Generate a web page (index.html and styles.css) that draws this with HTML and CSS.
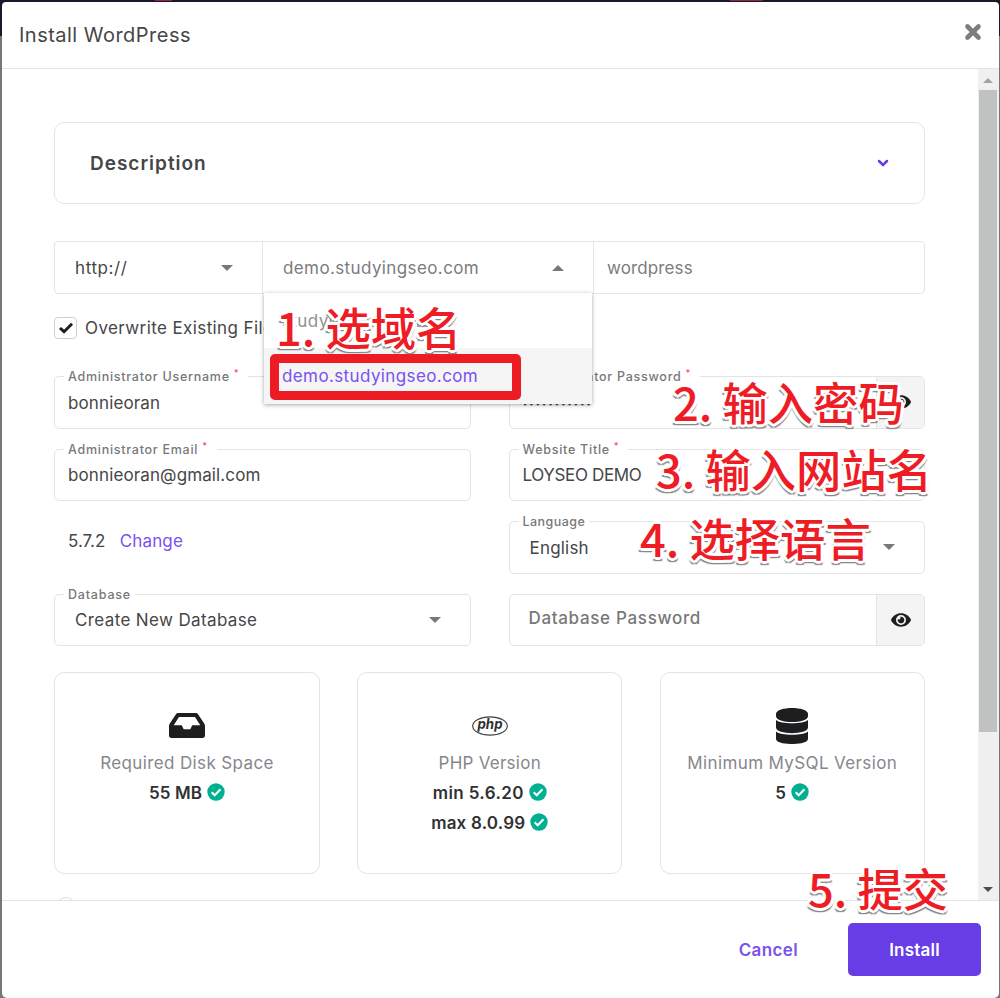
FILE: index.html
```html
<!DOCTYPE html>
<html lang="en">
<head>
<meta charset="utf-8">
<title>Install WordPress</title>
<link rel="stylesheet" href="styles.css">
</head>
<body>
<svg class="defs" width="0" height="0">
  <symbol id="check" viewBox="0 0 18 18"><circle cx="9" cy="9" r="8.7" fill="#00b090"/><path d="M4.7 9.3l3 3 5.8-6" fill="none" stroke="#fff" stroke-width="2.1"/></symbol>
  <symbol id="eye" viewBox="0 0 576 512"><path fill="#1d1e20" d="M572.5 241.4C518.3 135.6 410.9 64 288 64S57.7 135.600 3.500 241.400a32.400 32.400 0 0 0 0 29.200C57.700 376.400 165.100 448 288 448s230.300-71.600 284.500-177.400a32.400 32.400 0 0 0 0-29.200zM288 400a144 144 0 1 1 144-144 143.900 143.900 0 0 1-144 144zm0-240a95.300 95.300 0 0 0-25.300 3.800 47.900 47.900 0 0 1-66.900 66.900A95.800 95.800 0 1 0 288 160z"/></symbol>
</svg>
<div class="backdrop">
  <i class="bg-pink pink-a"></i><i class="bg-pink pink-b"></i>
  <div class="dialog">
    <header class="header">
      <h1 class="title t-title">Install WordPress</h1>
      <svg class="close" width="18" height="18" viewBox="0 0 18 18"><path d="M3.500 3.500l11 11M14.500 3.500l-11 11" stroke="#7d7d7e" stroke-width="4.600" stroke-linecap="round"/></svg>
    </header>
    <div class="middle">
      <main class="content">
        <section class="description">
          <span class="t-desc">Description</span>
          <svg width="12" height="8" viewBox="0 0 12 8"><path d="M2 2l4 4 4-4" fill="none" stroke="#673de6" stroke-width="2.500" stroke-linecap="round"/></svg>
        </section>

        <div class="url-row">
          <div class="url-cell scheme"><span class="t-http">http://</span><i class="tri down"></i></div>
          <div class="url-cell domain">
            <span class="t-domain">demo.studyingseo.com</span><i class="tri up"></i>
            <div class="menu">
              <div class="option"><span class="t-domain">studyingseo.com</span></div>
              <div class="option selected"><span class="t-domain">demo.studyingseo.com</span></div>
            </div>
          </div>
          <div class="url-cell path"><span class="t-wp">wordpress</span></div>
        </div>

        <div class="check-row">
          <span class="checkbox"><svg width="16" height="12" viewBox="0 0 16 12"><path d="M2 6l4 3.700L14 1.800" fill="none" stroke="#1d1e20" stroke-width="3"/></svg></span>
          <span class="t-over">Overwrite Existing Files</span>
        </div>

        <div class="fields">
          <div class="field"><label class="label">Administrator Username<b>*</b></label><span class="t-user">bonnieoran</span></div>
          <div class="field"><label class="label">Administrator Password<b>*</b></label><span class="dots">···········</span><span class="addon"><svg width="20" height="18"><use href="#eye"/></svg></span></div>
          <div class="field"><label class="label">Administrator Email<b>*</b></label><span class="t-mail">bonnieoran@gmail.com</span></div>
          <div class="field"><label class="label">Website Title<b>*</b></label><span class="t-site">LOYSEO DEMO</span></div>
          <div class="version"><span class="t-ver">5.7.2</span><a class="t-change">Change</a></div>
          <div class="field select"><label class="label t-lang">Language</label><span class="t-eng">English</span><i class="tri down"></i></div>
          <div class="field select"><label class="label t-dbl">Database</label><span class="t-create">Create New Database</span><i class="tri down"></i></div>
          <div class="field dbpass"><span class="t-dbp">Database Password</span><span class="addon"><svg width="20" height="18"><use href="#eye"/></svg></span></div>
        </div>

        <div class="cards">
          <div class="card">
            <div class="icon"><svg width="36" height="25" viewBox="0 0 36 25"><path fill="#1d1e20" fill-rule="evenodd" d="M9.500 0h17c1.300 0 2 .5 2.700 1.400l6 9c.5.800.8 1.500.8 2.500v9.600c0 1.500-1 2.500-2.500 2.500h-31C1 25 0 24 0 22.500v-9.600c0-1 .3-1.700.8-2.500l6-9C7.500.500 8.200 0 9.500 0zM10 4l-5.300 8.200h8l2 4h6.600l2-4h8L26 4z"/></svg></div>
            <span class="name t-disk">Required Disk Space</span>
            <span class="value"><span class="t-55">55 MB</span><svg width="18" height="18"><use href="#check"/></svg></span>
          </div>
          <div class="card">
            <div class="icon"><svg width="36" height="20" viewBox="0 0 36 20"><ellipse cx="18" cy="10" rx="17.300" ry="9.200" fill="none" stroke="#444" stroke-width="1.200"/><text x="18" y="13.400" text-anchor="middle" class="php" textLength="25" lengthAdjust="spacingAndGlyphs">php</text></svg></div>
            <span class="name t-php">PHP Version</span>
            <span class="value"><span class="t-min">min 5.6.20</span><svg width="18" height="18"><use href="#check"/></svg></span>
            <span class="value"><span class="t-max">max 8.0.99</span><svg width="18" height="18"><use href="#check"/></svg></span>
          </div>
          <div class="card">
            <div class="icon"><svg width="32" height="36" viewBox="0 0 32 36"><g fill="#1d1e20"><path d="M0 6C0-2 32-2 32 6v2c0 8-32 8-32 0z"/><path d="M0 12c4.500 4.400 27.500 4.400 32 0v7.500c0 7.500-32 7.500-32 0z"/><path d="M0 23.500c4.500 4.400 27.500 4.400 32 0V31c0 6.700-32 6.700-32 0z"/></g></svg></div>
            <span class="name t-mysql">Minimum MySQL Version</span>
            <span class="value"><span class="t-5">5</span><svg width="18" height="18"><use href="#check"/></svg></span>
          </div>
        </div>
        <i class="next-radio"></i>
      </main>
      <div class="scrollbar"><i class="sb-up"></i><div class="thumb"></div><i class="sb-down"></i></div>
    </div>
    <footer class="footer"><a class="t-cancel">Cancel</a><button class="install"><span class="t-install">Install</span></button></footer>
  </div>
  <div class="mark-box"></div>
  <div class="note n1">1. 选域名</div>
  <div class="note n2">2. 输入密码</div>
  <div class="note n3">3. 输入网站名</div>
  <div class="note n4">4. 选择语言</div>
  <div class="note n5">5. 提交</div>
</div>
</body>
</html>
```
FILE: styles.css
```css
* { box-sizing: border-box; }
body { margin: 0; font-family: Inter, "Noto Sans", sans-serif; font-size: 17px; color: #454648; }
.defs { position: absolute; }
svg { display: block; flex: none; }
.backdrop { position: relative; width: 1000px; height: 998px; overflow: hidden; padding: 2px 1px 0 2px; background: linear-gradient(#1c1729 36px, #777779 36px); }
.bg-pink { position: absolute; top: 0; height: 1px; background: #8d2748; }
.pink-a { left: 155px; width: 17px; }
.pink-b { left: 730px; width: 33px; }
.dialog { display: flex; flex-direction: column; height: 996px; background: #fff; border-radius: 4px 4px 5px 5px; overflow: hidden; }
.header { display: flex; justify-content: space-between; align-items: flex-start; height: 67px; padding: 0 17px; border-bottom: 1px solid #e4e4e5; }
.title { margin: 0; font-size: 20px; font-weight: 400; line-height: 67px; letter-spacing: .48px; }
.close { margin-top: 21px; }
.middle { display: flex; height: 832px; border-bottom: 1px solid #e4e4e5; }
.content { width: 976px; padding: 53px 53px 0 52px; overflow: hidden; }
.scrollbar { flex: 1; display: flex; flex-direction: column; align-items: center; background: #f0f0f0; padding: 9px 2px 0 0; }
.thumb { width: 18px; height: 642px; margin-top: 7px; background: #c0c1c1; }
.sb-up, .sb-down { border: 5px solid transparent; border-top: 0; border-bottom: 5px solid #a3a3a3; }
.sb-down { border-bottom: 0; border-top: 5px solid #505050; margin-top: 155px; }

.description { display: flex; justify-content: space-between; align-items: center; height: 82px; padding: 0 35px; border: 1px solid #e4e4e5; border-radius: 10px; font-size: 19px; font-weight: 600; letter-spacing: .98px; }
.url-row { display: flex; height: 53px; margin-top: 37px; border: 1px solid #e4e4e5; border-radius: 4px; }
.url-cell { position: relative; display: flex; justify-content: space-between; align-items: center; padding: 0 29px 0 20px; color: #7b7c80; }
.scheme { width: 208px; color: #454648; border-right: 1px solid #e4e4e5; }
.domain { width: 331px; border-right: 1px solid #e4e4e5; }
.path { padding-left: 13px; }
.tri { border: 6px solid transparent; border-top: 6px solid #77787a; border-bottom: 0; }
.tri.up { border-top: 0; border-bottom: 6px solid #77787a; }
.menu { position: absolute; z-index: 2; left: 1px; top: 51px; width: 328px; height: 111px; background: #fff; box-shadow: 0 1px 4px rgba(0,0,0,.35); }
.option { display: flex; align-items: center; height: 55px; padding-left: 18px; color: #8f9092; }
.option.selected { height: 56px; color: #7a52ee; background: #f5f5f5; }
.check-row { display: flex; align-items: center; height: 23px; margin-top: 22px; gap: 8px; }
.checkbox { display: flex; align-items: center; justify-content: center; width: 23px; height: 22px; border: 1px solid #d0d0d2; border-radius: 4px; }

.t-http { letter-spacing: .6px; }
.t-domain { letter-spacing: .39px; }
.t-over { letter-spacing: .4px; }
.t-php, .t-5 { letter-spacing: .25px; }
.t-wp, .t-user, .t-mail, .t-change, .t-55 { letter-spacing: .12px; }
.t-site { letter-spacing: -.36px; }
.t-create, .t-disk, .t-mysql, .t-min, .t-cancel { letter-spacing: .37px; }
.t-eng, .t-max, .t-install { letter-spacing: .2px; }
.t-dbp { letter-spacing: .67px; }

.fields { display: grid; grid-template-columns: 417px 416.500px; gap: 20px 37.500px; margin-top: 37px; }
.field { position: relative; display: flex; align-items: center; height: 52.500px; padding-left: 13px; border: 1px solid #e4e4e5; border-radius: 5px; }
.field.select { justify-content: space-between; padding: 0 29px 0 20px; }
.label { position: absolute; left: 9px; top: -9px; padding: 0 4px; background: #fff; font-size: 12.500px; font-weight: 500; line-height: 17px; color: #77787a; letter-spacing: .74px; white-space: nowrap; }
.label b { position: relative; top: -5px; margin: 0 5px 0 4px; font-size: 9px; font-weight: 600; color: #fc5185; }
.t-lang { letter-spacing: .45px; }
.t-dbl { letter-spacing: .8px; }
.t-user { padding-top: 1px; }
.t-eng { padding-top: 1px; }
.dots { padding-top: 3px; font-size: 17px; font-weight: 500; letter-spacing: 1.200px; }
.addon { display: flex; align-items: center; justify-content: center; width: 48px; height: 50.500px; margin-left: auto; background: #f4f4f5; border-left: 1px solid #e4e4e5; border-radius: 0 4px 4px 0; }
.version { display: flex; gap: 14.500px; padding: 10px 0 0 14px; line-height: 20px; }
.version a, .footer a { color: #7a52ee; }
.dbpass { padding-left: 19px; color: #77787a; font-weight: 500; }
.dbpass span:first-child { margin-top: -3px; }

.cards { display: grid; grid-template-columns: 266px 265px 265.500px; gap: 37.250px; margin-top: 26px; }
.card { display: flex; flex-direction: column; align-items: center; height: 201.500px; padding-top: 34px; border: 1px solid #e4e4e5; border-radius: 10px; }
.icon { display: flex; align-items: center; height: 37px; }
.name { height: 30px; margin-top: 4px; line-height: 30px; color: #86878c; white-space: nowrap; }
.value { display: flex; align-items: center; gap: 5px; height: 30px; color: #303133; font-weight: 600; white-space: nowrap; }
.value svg { margin-top: -2px; }
.php { font: italic bold 14px Inter, sans-serif; fill: #2f3032; }
.next-radio { display: block; width: 20px; height: 20px; margin: 23px 0 0 2px; border: 1px solid #dcdcdd; border-radius: 50%; }

.footer { display: flex; justify-content: flex-end; align-items: flex-start; gap: 50px; padding: 22px 18px 0 0; font-weight: 600; }
.footer a { line-height: 54px; }
.install { width: 133px; height: 53px; border: 0; border-radius: 5px; background: #673de6; color: #fff; font: inherit; }

.mark-box { position: absolute; z-index: 3; left: 270px; top: 354px; width: 251px; height: 46px; border: 9px solid #ed1c24; border-radius: 5px; }
.note { position: absolute; z-index: 4; font: 500 45.300px/60px "Noto Sans CJK SC", sans-serif; white-space: nowrap; color: #ee1c25; text-shadow: 3px 0 #fff, -3px 0 #fff, 0 3px #fff, 0 -3px #fff, 2px 2px #fff, -2px 2px #fff, 2px -2px #fff, -2px -2px #fff, 3px 1px #fff, -3px 1px #fff, 0 4px 1px #888, 2px 4px 1px #888, -2px 4px 1px #888; }
.n1 { left: 276px; top: 296px; }
.n2 { left: 673px; top: 371px; }
.n3 { left: 656px; top: 438px; }
.n4 { left: 640px; top: 507px; }
.n5 { left: 808px; top: 857px; }
```
